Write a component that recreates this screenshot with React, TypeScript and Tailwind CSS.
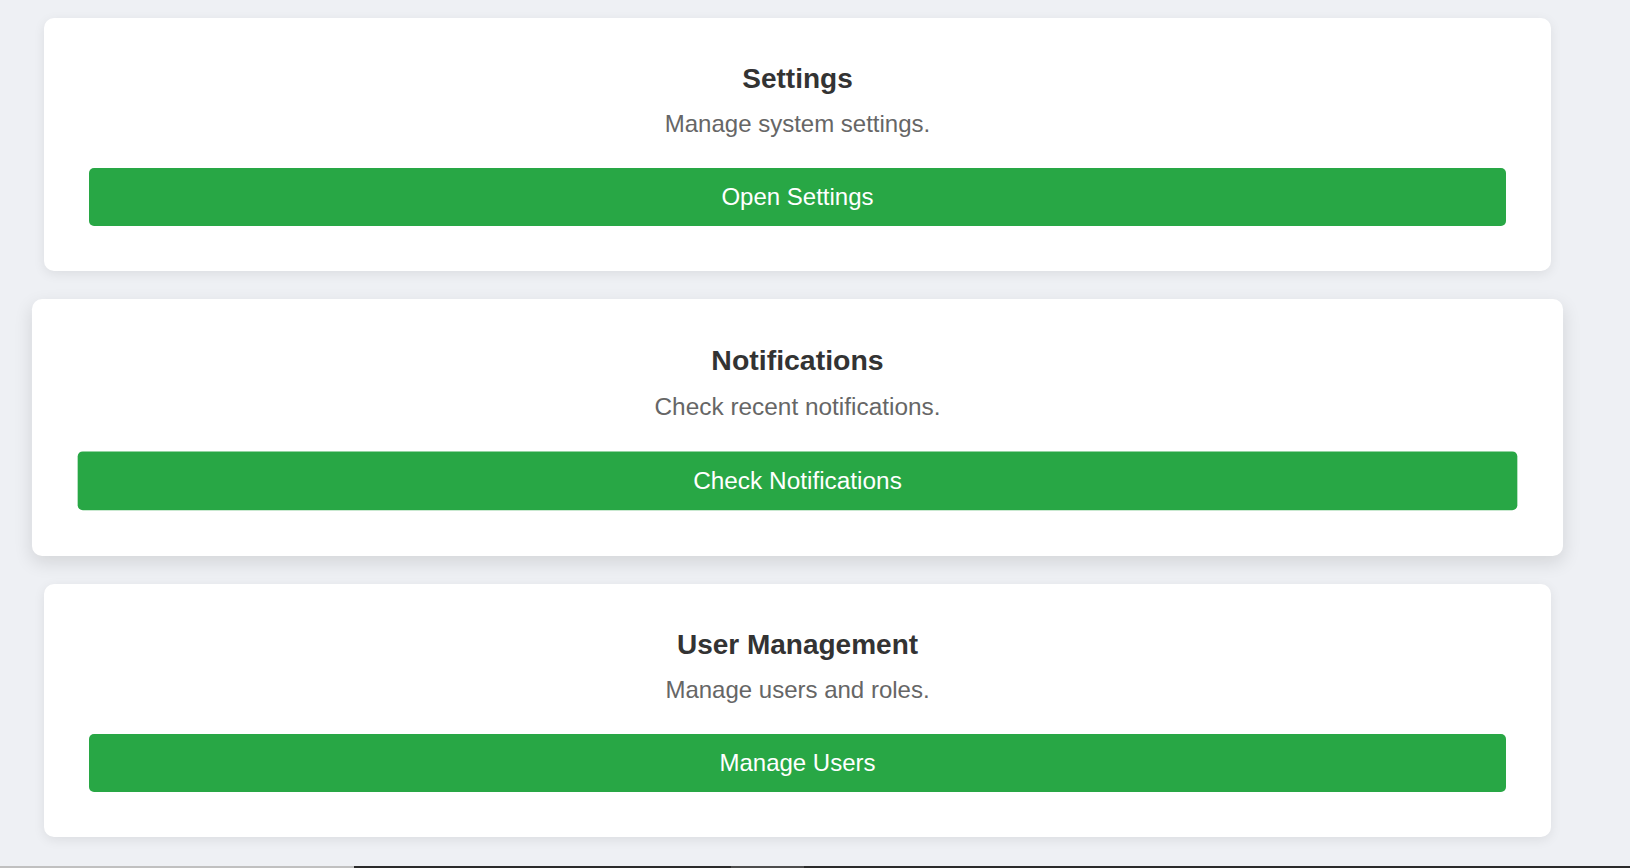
import React from "react";

type CardProps = {
  title: string;
  desc: string;
  action: string;
  hovered?: boolean;
};

function Card({ title, desc, action, hovered }: CardProps) {
  return (
    <div
      className={
        hovered
          ? "flex w-[1507px] scale-[1.016] flex-col items-stretch rounded-[10px] bg-white px-[45px] pt-[45px] pb-[45px] text-center shadow-[0_6px_18px_rgba(0,0,0,0.11)]"
          : "flex w-[1507px] flex-col items-stretch rounded-[10px] bg-white px-[45px] pt-[45px] pb-[45px] text-center shadow-[0_3px_12px_rgba(0,0,0,0.08)]"
      }
    >
      <h2 className="text-[28px] leading-[32px] font-bold text-[#333333]">{title}</h2>
      <p className="mt-[15px] text-[24px] leading-[28px] text-[#666666]">{desc}</p>
      <button
        type="button"
        className="mt-[30px] h-[58px] w-full rounded-[5px] bg-[#28a745] text-[24px] leading-[28px] text-white"
      >
        {action}
      </button>
    </div>
  );
}

export default function App() {
  return (
    <div
      className="flex min-h-[868px] w-full flex-col bg-[#eef0f4]"
      style={{ fontFamily: '"Liberation Sans", Arial, sans-serif' }}
    >
      <div className="flex flex-col gap-[30px] pt-[18px] pl-[44px]">
        <Card title="Settings" desc="Manage system settings." action="Open Settings" />
        <Card
          title="Notifications"
          desc="Check recent notifications."
          action="Check Notifications"
          hovered
        />
        <Card title="User Management" desc="Manage users and roles." action="Manage Users" />
      </div>
      <div className="mt-auto flex h-[2px] w-full">
        <div className="h-full w-[354px] bg-[#c0c0c0]" />
        <div className="h-full w-[377px] bg-[#2b2b2b]" />
        <div className="h-full w-[73px] bg-[#4d4d4d]" />
        <div className="h-full flex-1 bg-[#2b2b2b]" />
      </div>
    </div>
  );
}
